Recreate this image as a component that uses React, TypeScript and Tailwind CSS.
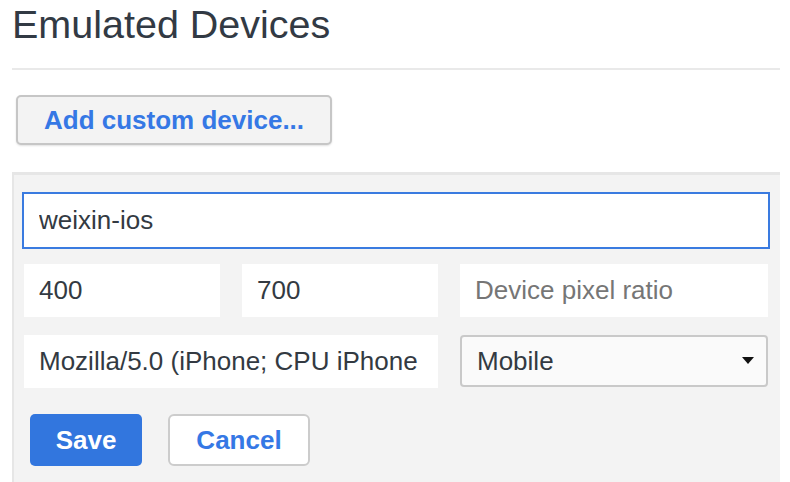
import React, { useState } from 'react';

const font = "font-['Liberation_Sans',Arial,sans-serif]";

const App: React.FC = () => {
  const [name, setName] = useState("weixin-ios");
  const [width, setWidth] = useState("400");
  const [height, setHeight] = useState("700");
  const [ratio, setRatio] = useState("");
  const [ua, setUa] = useState(
    "Mozilla/5.0 (iPhone; CPU iPhone OS 13_2_3 like Mac OS X) AppleWebKit/605.1.15 (KHTML, like Gecko) Version/13.0.3 Mobile/15E148 Safari/604.1"
  );
  const [type, setType] = useState("Mobile");

  // plain white fields, no visible border
  const field =
    "h-[53px] bg-white px-[15px] text-[26px] text-[#333a42] outline-none placeholder:text-[#767676] min-w-0";

  return (
    <div className={`${font} min-h-[482px] bg-white pl-[12px] pr-[10px] overflow-hidden`}>
      <h1 className="text-[39.5px] leading-[49px] text-[#323a44] font-normal">
        Emulated Devices
      </h1>
      <div className="mt-[19px] h-[2px] bg-[#e9e9e9]" />

      <button
        type="button"
        className="mt-[25px] ml-[4px] h-[50px] px-[26px] rounded-[5px] border-2 border-[#c6c6c6] bg-[#f3f3f3] text-[26px] font-bold text-[#3578e5] shadow-[0_1px_2px_rgba(0,0,0,0.12)]"
      >
        Add custom device...
      </button>

      <div className="mt-[27px] border-t-[3px] border-l-2 border-[#e6e6e6] bg-[#f3f3f3] pl-[10px] pr-[12px] pt-[19px] pb-[20px]">
        <input
          value={name}
          onChange={(e) => setName(e.target.value)}
          className={`${field} w-full outline-2 outline-[#3a7be0] outline-offset-0 border-0`}
          style={{ outlineStyle: 'solid' }}
        />

        <div className="mt-[17px] flex gap-[22px]">
          <input
            value={width}
            onChange={(e) => setWidth(e.target.value)}
            className={`${field} w-[196px]`}
          />
          <input
            value={height}
            onChange={(e) => setHeight(e.target.value)}
            className={`${field} w-[196px]`}
          />
          <input
            value={ratio}
            onChange={(e) => setRatio(e.target.value)}
            placeholder="Device pixel ratio"
            className={`${field} flex-1`}
          />
        </div>

        <div className="mt-[18px] flex gap-[22px]">
          <input
            value={ua}
            onChange={(e) => setUa(e.target.value)}
            className={`${field} h-[52px] w-[414px]`}
          />
          <div className="relative flex-1">
            <select
              value={type}
              onChange={(e) => setType(e.target.value)}
              className="h-[52px] w-full appearance-none rounded-[4px] border-2 border-[#c9c9c9] bg-[#fafafa] pl-[15px] text-[26px] text-[#333a42] outline-none"
            >
              <option>Mobile</option>
              <option>Mobile (no touch)</option>
              <option>Desktop</option>
              <option>Desktop (touch)</option>
            </select>
            <svg
              className="pointer-events-none absolute right-[14px] top-[22px]"
              width="12"
              height="8"
              viewBox="0 0 12 8"
            >
              <path d="M0 0h12L6 7z" fill="#111" />
            </svg>
          </div>
        </div>

        <div className="mt-[26px] ml-[6px] flex gap-[26px]">
          <button
            type="button"
            className="h-[52px] w-[112px] rounded-[5px] bg-[#3276de] text-[26px] font-bold text-white"
          >
            Save
          </button>
          <button
            type="button"
            className="h-[52px] w-[142px] rounded-[6px] border-2 border-[#cccccc] bg-white text-[26px] font-bold text-[#3578e5]"
          >
            Cancel
          </button>
        </div>
      </div>
    </div>
  );
};

export default App;
